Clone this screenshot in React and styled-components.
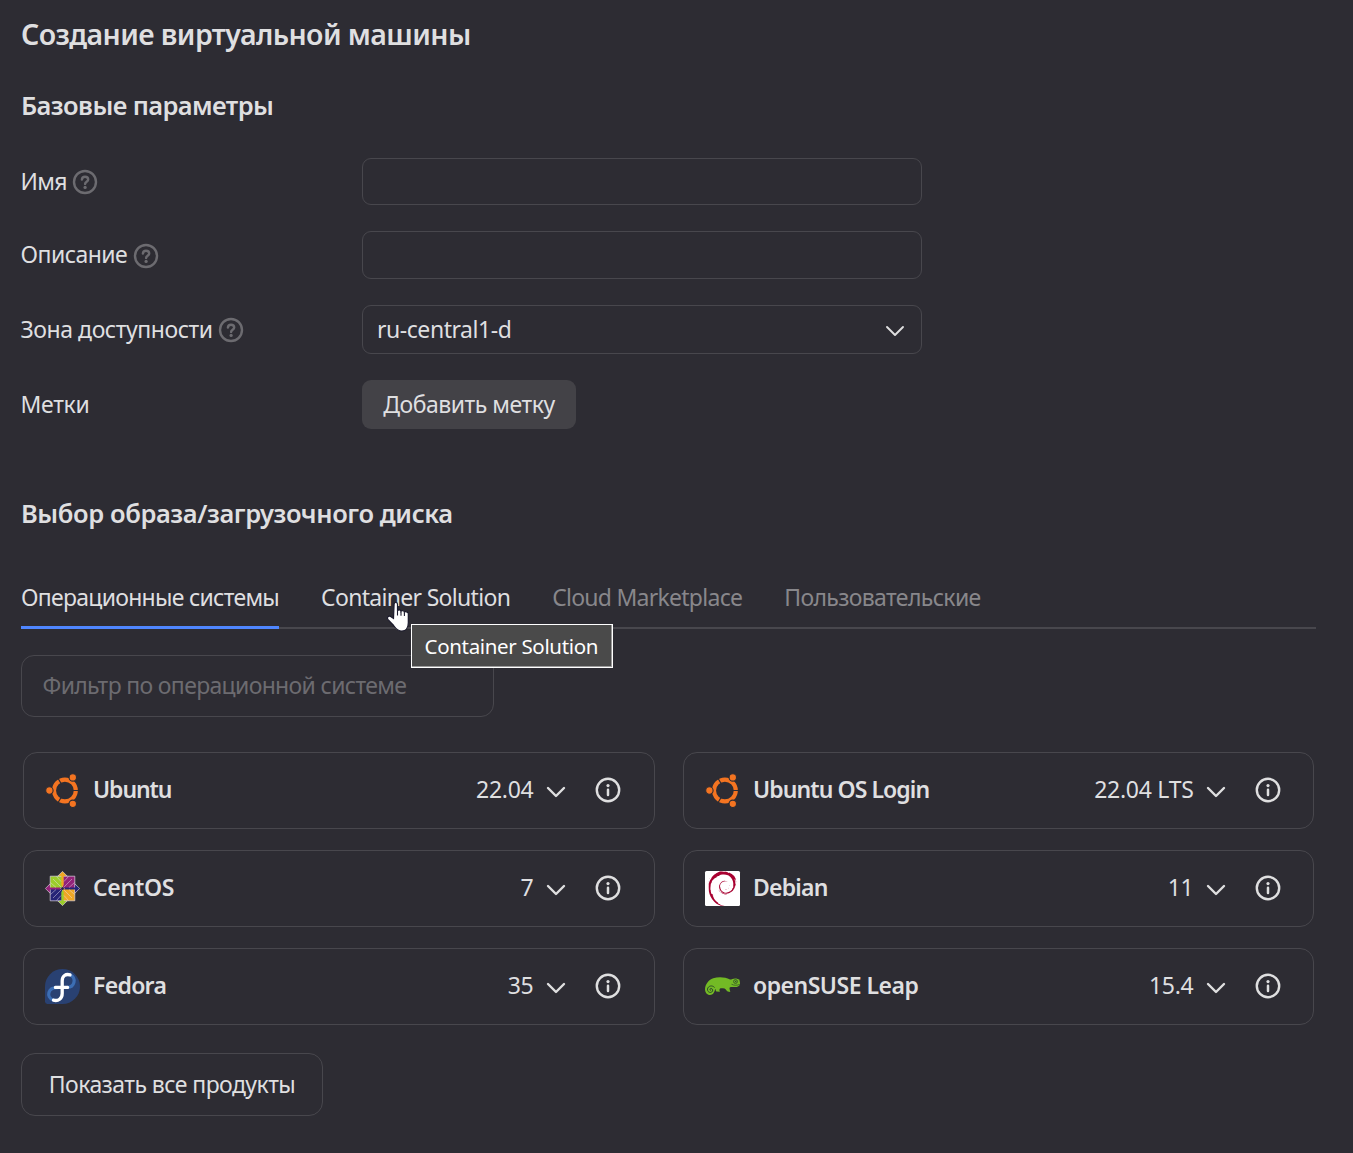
import React from "react";
import styled, { createGlobalStyle } from "styled-components";
import { SiDebian } from "react-icons/si";

const GlobalStyle = createGlobalStyle`
  *, *::before, *::after { box-sizing: border-box; }
  body {
    margin: 0;
    background: #2d2c33;
    color: #dfdfe0;
    font-family: "Noto Sans", "Open Sans", sans-serif;
    font-size: 23px;
  }
  button, input { font: inherit; color: inherit; }
`;

const line = "#48474d";

const Page = styled.main`
  width: 1353px;
  height: 1153px;
  padding: 20px 0 0 21px;
  overflow: hidden;
`;

const Title = styled.h1`
  margin: 0;
  font-size: 28.5px;
  font-weight: 600;
  line-height: 28px;
  letter-spacing: -0.59px;
`;

const SectionTitle = styled.h2`
  margin: ${p => p.$top}px 0 0;
  font-size: 25.5px;
  font-weight: 600;
  line-height: 30px;
  letter-spacing: ${p => p.$tracking}px;
`;

const Form = styled.form`
  display: flex;
  flex-direction: column;
  gap: 26px;
  margin-top: 38px;
`;

const Row = styled.div`
  display: grid;
  grid-template-columns: 341px 560px;
  height: ${p => p.$height}px;
`;

const Label = styled.label`
  display: flex;
  align-items: center;
  gap: 5.5px;
  padding-bottom: 2px;
  margin-left: -0.5px;
  letter-spacing: ${p => p.$tracking || 0}px;

  svg { margin-top: 3px; }
`;

const Input = styled.input`
  width: 100%;
  height: 100%;
  padding: 0 14px;
  border: 1px solid ${line};
  border-radius: 9px;
  background: transparent;
  outline: none;
`;

const Select = styled.div`
  display: flex;
  align-items: center;
  justify-content: space-between;
  padding: 0 16px 2px 14px;
  border: 1px solid ${line};
  border-radius: 9px;
  letter-spacing: -0.45px;

  svg { margin-top: 4px; }
`;

const AddButton = styled.button`
  width: 214px;
  padding: 0 0 2px;
  border: 0;
  border-radius: 9px;
  background: #434247;
  letter-spacing: -0.48px;
`;

const Tabs = styled.nav`
  display: flex;
  gap: 42px;
  width: 1295px;
  height: 52px;
  margin-top: 49px;
  box-shadow: inset 0 -2px 0 #48474d;
`;

const Tab = styled.div`
  position: relative;
  line-height: 40px;
  white-space: nowrap;
  letter-spacing: ${p => p.$tracking}px;
  color: ${p => (p.$lit ? "#dfdfe0" : "#88878b")};
  border-bottom: 3px solid ${p => (p.$active ? "#4f86ff" : "transparent")};
`;

const Cursor = styled.svg`
  position: absolute;
  left: 58px;
  top: 18px;
  z-index: 2;
`;

const Tooltip = styled.div`
  position: absolute;
  left: 90px;
  top: 47px;
  z-index: 1;
  width: 202px;
  height: 44px;
  padding-left: 12.5px;
  border: 1px solid #fff;
  background: #4a4a4a;
  box-shadow: inset -1px -1px 0 #9b9b9b;
  color: #fff;
  font-size: 20.5px;
  line-height: 42px;
  letter-spacing: -0.34px;
`;

const Filter = styled.input`
  display: block;
  width: 473px;
  height: 62px;
  margin-top: 26px;
  padding: 0 20px 3px 20.5px;
  border: 1px solid ${line};
  border-radius: 13px;
  background: transparent;
  outline: none;
  letter-spacing: -0.66px;

  &::placeholder { color: #6c6b70; opacity: 1; }
`;

const Grid = styled.section`
  display: grid;
  grid-template-columns: 632px 631px;
  grid-auto-rows: 77px;
  gap: 21px 28px;
  margin: 35px 0 0 2px;
`;

const Card = styled.article`
  display: flex;
  align-items: center;
  padding: 0 33px 0 21px;
  border: 1px solid ${line};
  border-radius: 14px;

  &:nth-child(even) { padding-right: 32px; }
`;

const Name = styled.span`
  margin-left: 13px;
  padding-bottom: 4px;
  font-weight: 600;
  letter-spacing: ${p => p.$tracking}px;
`;

const Version = styled.span`
  margin: 0 12.5px 0 auto;
  padding-bottom: 4px;
  letter-spacing: -0.28px;
`;

const InfoSlot = styled.span`
  display: flex;
  margin: 0 0 1px 29px;
`;

const ShowAll = styled.button`
  width: 302px;
  height: 63px;
  margin-top: 28px;
  padding: 0 0 2px;
  border: 1px solid ${line};
  border-radius: 14px;
  background: transparent;
  letter-spacing: -0.56px;
`;

const HelpIcon = () => (
  <svg width="26" height="26" viewBox="0 0 26 26" fill="none" stroke="#6c6b70">
    <circle cx="13" cy="13" r="11" strokeWidth="2.4" />
    <path d="M9.9 10.6c.1-1.8 1.3-2.9 3.1-2.9s3.2 1.1 3.2 2.7c0 2.3-3.1 2.3-3.1 4.5" strokeWidth="2.4" strokeLinecap="round" />
    <circle cx="13.1" cy="18.4" r="1.6" fill="#6c6b70" stroke="none" />
  </svg>
);

const InfoIcon = () => (
  <svg width="26" height="26" viewBox="0 0 26 26" fill="none" stroke="#dfdfe0">
    <circle cx="13" cy="13" r="11.2" strokeWidth="2.4" />
    <circle cx="13" cy="8.6" r="1.6" fill="#dfdfe0" stroke="none" />
    <path d="M13 12.7v5.4" strokeWidth="2.5" strokeLinecap="round" />
  </svg>
);

const Chevron = ({ weight }) => (
  <svg width="20" height="12" viewBox="0 0 20 12" fill="none" stroke="#dfdfe0" strokeWidth={weight} strokeLinecap="round" strokeLinejoin="round">
    <path d="M2 2l8 8 8-8" />
  </svg>
);

const CardChevron = styled.span`
  display: flex;
  margin-top: 3px;
`;

const UbuntuLogo = () => (
  <svg width="35" height="35" viewBox="0 0 35 35">
    <circle cx="19.9" cy="17.5" r="10.9" fill="none" stroke="#f47421" strokeWidth="4.1" />
    <path d="M28 17.5h7M16.3 10.9l-3.6-6.2M16.3 24.1l-3.6 6.2" stroke="#2d2c33" strokeWidth="1.1" />
    <g fill="#f47421" stroke="#2d2c33" strokeWidth="1.1">
      <circle cx="4.4" cy="17.5" r="3.7" />
      <circle cx="27.8" cy="4.4" r="3.7" />
      <circle cx="27.8" cy="30.8" r="3.7" />
    </g>
  </svg>
);

const CentosLogo = () => (
  <svg width="35" height="35" viewBox="0 0 35 35">
    <g stroke="#dcd5e2" strokeWidth="0.7">
      <path d="M17.5 .4l5 5h-10z" fill="#efa724" />
      <path d="M34.6 17.5l-5 5v-10z" fill="#262577" />
      <path d="M17.5 34.6l-5-5h10z" fill="#9ccd2a" />
      <path d="M.4 17.5l5-5v10z" fill="#932279" />
      <path d="M5.2 5.2h12.3v12.3H5.2z" fill="#9ccd2a" />
      <path d="M17.5 5.2h12.3v12.3H17.5z" fill="#932279" />
      <path d="M17.5 17.5h12.3v12.3H17.5z" fill="#efa724" />
      <path d="M5.2 17.5h12.3v12.3H5.2z" fill="#262577" />
    </g>
    <path d="M17.5 .8l3.5 4h-2.3v9l-1.2 2.5-1.2-2.5v-9h-2.3z" fill="#efa724" />
    <path d="M17.5 34.2l-3.5-4h2.3v-9l1.2-2.5 1.2 2.5v9h2.3z" fill="#9ccd2a" />
    <path d="M.8 17.5l4-3.4v2.4h10.7v2H4.8v2.4z" fill="#932279" />
    <path d="M34.2 17.5l-4-3.4v2.4H19.5v2h10.7v2.4z" fill="#262577" />
    <path
      d="M8 8l9.5 9.5L27 8M8 27l9.5-9.5L27 27M5.5 11.5l5.5 5M11.5 5.5l4.5 5M29.5 11.500l-5.500 5M23.500 5.500l-4.500 5M5.500 23.500l5.500-5M11.500 29.500l4.500-5M29.500 23.500l-5.500-5M23.500 29.500l-4.500-5"
      fill="none"
      stroke="#e6e0ea"
      strokeWidth="0.8"
      opacity="0.6"
    />
    <circle cx="17.5" cy="17.5" r="1.5" fill="#2b2440" />
  </svg>
);

const FedoraLogo = () => (
  <svg width="35" height="35" viewBox="0 0 35 35" fill="none" strokeLinecap="round">
    <path d="M0 17.5A17.5 17.5 0 1 1 17.5 35H2.4A2.4 2.4 0 0 1 0 32.6z" fill="#294172" />
    <path d="M25.3 5.800c6.500 3.500 4.200 12.600-3 12.600M12.500 18.600c-9.400-.6-12 9.400-4.200 12.500" stroke="#3c6eb4" strokeWidth="3.200" />
    <path d="M25 5.900c-4.200-1.400-7.800 1.100-7.800 5.900v12.700c0 5-4 8-8.700 6.700M10.400 18.400h12.200" stroke="#fff" strokeWidth="3.300" />
  </svg>
);

const DebianTile = styled.span`
  display: flex;
  width: 35px;
  height: 35px;
  border-radius: 1.5px;
  background: #fff;
  color: #a80030;
`;

const DebianLogo = () => (
  <DebianTile>
    <SiDebian size={35} />
  </DebianTile>
);

const OpensuseLogo = () => (
  <svg width="35" height="35" viewBox="0 0 35 35">
    <path
      d="M0 20.5C.2 15.500 3.200 11.200 8.200 9.300c5-1.700 12-1.400 16.800 1.200 1.600-.1 3.200-1 5-1.100 1.700-.1 3.200.6 4.300 1.100.5 1.800.9 3.400.7 4.900-1.200 2-2.700 2.700-4.700 2.700-2.200 0-3.900-.6-5.600.4-.5 1.300.2 2.600.6 4.500l-2.600-.4c-1.400-1.200-2-3-3.200-3.200-2.200 0-3.800-.3-4.700.3-.6 1-.4 2 .1 3l-3.600-.1c-.8-1-.5-2.300-1-2.800-.8 3.700-2.300 6.200-5.200 6.200C2 26 .2 23.500 0 20.500z"
      fill="#73ba25"
    />
    <path d="M9.3 18.200C7 15.700 3 17 2.500 20c-.3 2.600 2.200 4.200 4.200 3.100 1.700-1.100 1.200-3.700-.8-3.600-1.300.2-1.300 1.700-.3 1.900" fill="none" stroke="#2d4a2a" strokeWidth="1" strokeLinecap="round" />
    <circle cx="30.5" cy="12.5" r="1.9" fill="#73ba25" stroke="#2d4a2a" strokeWidth=".8" />
    <circle cx="30.7" cy="12.5" r=".7" fill="#2d4a2a" />
    <path d="M26.5 15.200c2.500 1.400 5.500 1.300 8.300.2" fill="none" stroke="#2d4a2a" strokeWidth=".7" />
  </svg>
);

const HandCursor = () => (
  <Cursor width="40" height="40" viewBox="0 0 40 40">
    <path
      d="M15.100 9.200c0-2.300 3.400-2.300 3.400 0v6.500c.5-1.200 3.200-1.100 3.500.6.600-1 3.200-.8 3.400.9.700-.9 3.600-.6 3.900 1.300v9.200c0 5-2.600 8.300-6.500 8.300-4 0-6-2.300-8.200-5.500l-5.500-5.800c-1.700-2 .2-4.400 2.500-3.300l2.900 2z"
      fill="#fff"
      stroke="#1b1a2c"
      strokeWidth="1.2"
    />
    <path d="M18.500 15.500v5M22 16.500v4.200M25.400 17.500v3.600" stroke="#1b1a2c" strokeWidth="1.1" fill="none" />
  </Cursor>
);

const systems = [
  { logo: UbuntuLogo, name: "Ubuntu", version: "22.04", tracking: -1.1 },
  { logo: UbuntuLogo, name: "Ubuntu OS Login", version: "22.04 LTS", tracking: -0.92 },
  { logo: CentosLogo, name: "CentOS", version: "7", tracking: -0.3 },
  { logo: DebianLogo, name: "Debian", version: "11", tracking: -0.8 },
  { logo: FedoraLogo, name: "Fedora", version: "35", tracking: -0.7 },
  { logo: OpensuseLogo, name: "openSUSE Leap", version: "15.4", tracking: -0.5 },
];

export default function App() {
  return (
    <Page>
      <GlobalStyle />
      <Title>Создание виртуальной машины</Title>

      <SectionTitle $top={42} $tracking={-0.6}>Базовые параметры</SectionTitle>
      <Form>
        <Row $height={47}>
          <Label $tracking={-0.65}>Имя <HelpIcon /></Label>
          <Input />
        </Row>
        <Row $height={48}>
          <Label $tracking={-0.52}>Описание <HelpIcon /></Label>
          <Input />
        </Row>
        <Row $height={49}>
          <Label $tracking={-0.44}>Зона доступности <HelpIcon /></Label>
          <Select>ru-central1-d <Chevron weight={1.9} /></Select>
        </Row>
        <Row $height={49}>
          <Label $tracking={-0.3}>Метки</Label>
          <AddButton type="button">Добавить метку</AddButton>
        </Row>
      </Form>

      <SectionTitle $top={69} $tracking={-0.41}>Выбор образа/загрузочного диска</SectionTitle>
      <Tabs>
        <Tab $active $lit $tracking={-0.72}>Операционные системы</Tab>
        <Tab $lit $tracking={-0.69}>
          Container Solution
          <HandCursor />
          <Tooltip>Container Solution</Tooltip>
        </Tab>
        <Tab $tracking={-0.74}>Cloud Marketplace</Tab>
        <Tab $tracking={-0.64}>Пользовательские</Tab>
      </Tabs>

      <Filter placeholder="Фильтр по операционной системе" />

      <Grid>
        {systems.map(({ logo: Logo, name, version, tracking }) => (
          <Card key={name}>
            <Logo />
            <Name $tracking={tracking}>{name}</Name>
            <Version>{version}</Version>
            <CardChevron><Chevron weight={2.4} /></CardChevron>
            <InfoSlot><InfoIcon /></InfoSlot>
          </Card>
        ))}
      </Grid>

      <ShowAll>Показать все продукты</ShowAll>
    </Page>
  );
}
